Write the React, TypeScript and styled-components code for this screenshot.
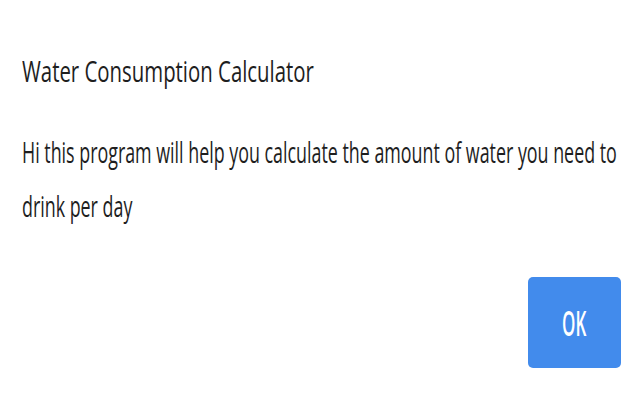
import styled, { createGlobalStyle } from 'styled-components';

const GlobalStyle = createGlobalStyle`
  html, body {
    margin: 0;
    padding: 0;
    background: #ffffff;
    overflow: hidden;
  }

  body {
    font-family: 'Open Sans', 'Noto Sans', Arial, sans-serif;
    color: #1e1e1e;
  }
`;

export default function App() {
  return (
    <>
      <GlobalStyle />
      <S.Dialog>
        <S.Title $squeeze={0.715}>Water Consumption Calculator</S.Title>
        <S.Message $squeeze={0.605}>
          Hi this program will help you calculate the amount of water you need to drink per day
        </S.Message>
        <S.Actions>
          <S.OkButton type='button'>
            <S.ButtonLabel $squeeze={0.5}>OK</S.ButtonLabel>
          </S.OkButton>
        </S.Actions>
      </S.Dialog>
    </>
  );
}

// the dialog font is drawn narrow, so each text block is squeezed on x
type SqueezeProps = { $squeeze: number };

const S = {
  Dialog: styled.div`
    width: 640px;
    height: 400px;
    box-sizing: border-box;
    padding: 53px 19px 0 22px;
    display: flex;
    flex-direction: column;
    overflow: hidden;
  `,

  Title: styled.h1<SqueezeProps>`
    margin: 0;
    font-size: 28.5px;
    font-weight: 500;
    line-height: 36px;
    white-space: nowrap;
    transform: scaleX(${({ $squeeze }) => $squeeze});
    transform-origin: left center;
  `,

  Message: styled.p<SqueezeProps>`
    margin: 36px 0 0;
    width: 1010px;
    flex-shrink: 0;
    font-size: 29.5px;
    font-weight: 500;
    line-height: 54px;
    transform: scaleX(${({ $squeeze }) => $squeeze});
    transform-origin: left center;
  `,

  Actions: styled.div`
    margin-top: 44px;
    display: flex;
    justify-content: flex-end;
  `,

  OkButton: styled.button`
    width: 93px;
    height: 91px;
    padding: 0;
    border: none;
    border-radius: 5px;
    background: #428bec;
    color: #ffffff;
    display: flex;
    align-items: center;
    justify-content: center;
    font-family: inherit;
    cursor: pointer;
  `,

  ButtonLabel: styled.span<SqueezeProps>`
    display: inline-block;
    font-size: 34px;
    font-weight: 600;
    line-height: 1;
    transform: scaleX(${({ $squeeze }) => $squeeze});
  `,
};
